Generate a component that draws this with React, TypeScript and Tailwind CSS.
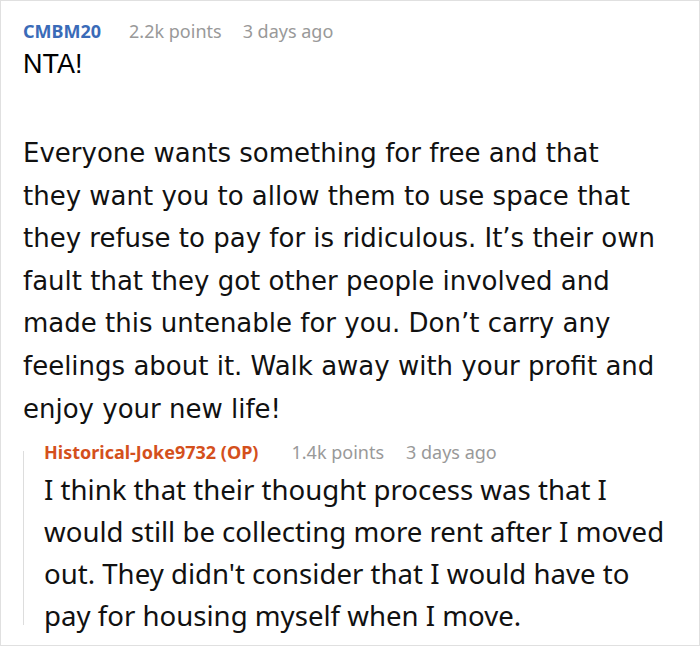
const mainLines = [
  "Everyone wants something for free and that",
  "they want you to allow them to use space that",
  "they refuse to pay for is ridiculous. It’s their own",
  "fault that they got other people involved and",
  "made this untenable for you. Don’t carry any",
  "feelings about it. Walk away with your profit and",
  "enjoy your new life!",
];

const replyLines = [
  "I think that their thought process was that I",
  "would still be collecting more rent after I moved",
  "out. They didn't consider that I would have to",
  "pay for housing myself when I move.",
];

export default function App() {
  return (
    <div
      className="w-[700px] h-[646px] bg-white border border-[#e0e0e0] overflow-hidden"
      style={{ fontFamily: '"Noto Sans", "Open Sans", sans-serif' }}
    >
      <div className="pl-[22px] pr-[4px] pt-[16px]">
        <div className="flex items-center text-[18px] leading-[28px] whitespace-nowrap">
          <span className="font-bold text-[#3a6bb8]">CMBM20</span>
          <span className="ml-[28px] text-[#999999]">2.2k points</span>
          <span className="ml-[21px] text-[#999999]">3 days ago</span>
        </div>
        <div
          className="text-[27px] leading-[42px] text-black -mt-[2px]"
          style={{ fontFamily: '"Liberation Sans", Arial, sans-serif' }}
        >
          NTA!
        </div>
        <div
          className="text-[26px] leading-[42.6px] text-[#111111] mt-[47px] whitespace-nowrap"
          style={{ fontFamily: '"DejaVu Sans", "Noto Sans", sans-serif' }}
        >
          {mainLines.map((l) => (
            <div key={l}>{l}</div>
          ))}
        </div>
        <div className="mt-[10px] flex">
          <div className="w-px bg-[#dddddd] mt-[11px] mb-[11px] shrink-0" />
          <div className="pl-[20px]">
            <div className="flex items-center text-[18px] leading-[24px] whitespace-nowrap">
              <span className="font-bold text-[#d4501c]">Historical-Joke9732 (OP)</span>
              <span className="ml-[33px] text-[#999999]">1.4k points</span>
              <span className="ml-[22px] text-[#999999]">3 days ago</span>
            </div>
            <div className="text-[27.6px] leading-[42px] text-[#111111] mt-[4px] whitespace-nowrap">
              {replyLines.map((l) => (
                <div key={l}>{l}</div>
              ))}
            </div>
          </div>
        </div>
      </div>
    </div>
  );
}
